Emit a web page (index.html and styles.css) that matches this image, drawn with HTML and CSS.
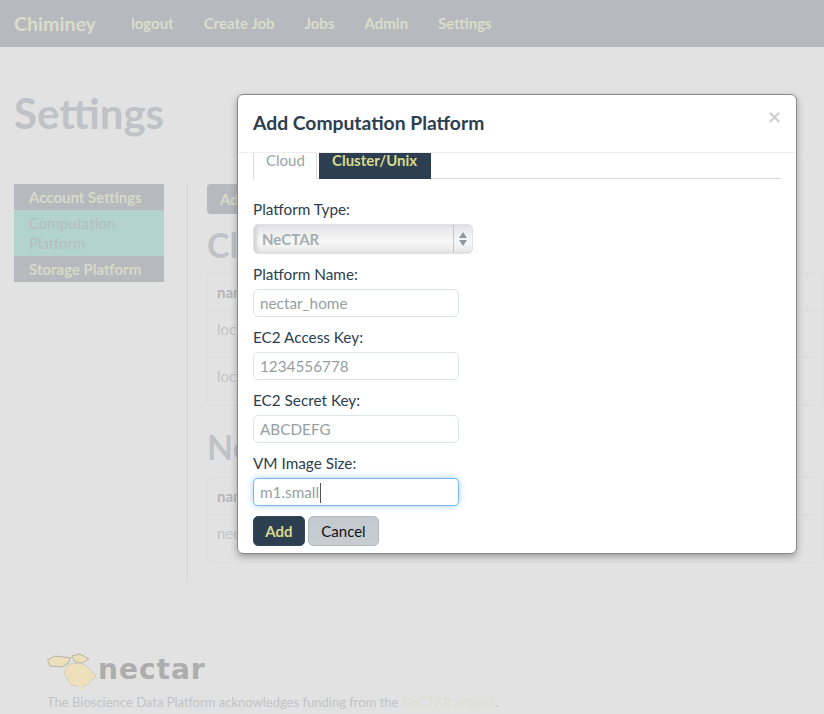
FILE: index.html
```html
<!DOCTYPE html>
<html lang="en">
<head>
  <meta charset="UTF-8">
  <title>Chiminey - Settings</title>
  <link rel="stylesheet" href="styles.css">
</head>
<body>
  <nav class="navbar">
    <a class="brand">Chiminey</a>
    <a>logout</a>
    <a>Create Job</a>
    <a>Jobs</a>
    <a>Admin</a>
    <a>Settings</a>
  </nav>

  <div class="page">
    <h1 class="page-title">Settings</h1>
    <div class="columns">
      <ul class="side-nav">
        <li>Account Settings</li>
        <li class="active">Computation Platform</li>
        <li>Storage Platform</li>
      </ul>
      <div class="content">
        <button class="add-btn">Add</button>
        <h2>Cloud</h2>
        <div class="data-table">
          <div class="row head">name</div>
          <div class="row tall">local</div>
          <div class="row tall">local</div>
        </div>
        <h2 class="second">NeCTAR</h2>
        <div class="data-table">
          <div class="row head">name</div>
          <div class="row tall">nectar_home</div>
        </div>
      </div>
    </div>
  </div>

  <footer class="footer">
    <div class="logo">
      <svg width="52" height="38" viewBox="0 0 52 38">
        <polygon points="0.5,8 8,4 24,6 21,11 15,15 3,14" fill="#ecdfba" stroke="#b5b2aa"/>
        <polygon points="25,4 33,2 42,7 36,11 28,10" fill="#ecdfba" stroke="#b5b2aa"/>
        <polygon points="21,12 33,11 40,14 49,24 40,33 35,35 24,33 17,21" fill="#eee0ba" stroke="#d0cdc2"/>
        <rect x="32" y="34" width="3" height="4" fill="#eee0ba"/>
      </svg>
      <span class="logo-text">nectar</span>
    </div>
    <p>The Bioscience Data Platform acknowledges funding from the <a>NeCTAR project</a>.</p>
  </footer>

  <div class="modal">
    <div class="modal-header">
      <h3>Add Computation Platform</h3>
      <span class="close">×</span>
    </div>
    <div class="modal-body">
      <div class="tabs">
        <a class="tab current">Cloud</a>
        <a class="tab dark">Cluster/Unix</a>
      </div>
      <form class="form">
        <label>Platform Type:</label>
        <div class="select">
          <span>NeCTAR</span>
          <span class="arrows">
            <svg width="10" height="16" viewBox="0 0 10 16"><path d="M5 1 9 7H1ZM5 15 1 9H9Z" fill="#8f989c"/></svg>
          </span>
        </div>
        <label>Platform Name:</label>
        <input class="field" type="text" value="nectar_home">
        <label>EC2 Access Key:</label>
        <input class="field" type="text" value="1234556778">
        <label>EC2 Secret Key:</label>
        <input class="field" type="text" value="ABCDEFG">
        <label>VM Image Size:</label>
        <div class="field focused">m1.small<i class="caret"></i></div>
        <div class="actions">
          <button type="button" class="btn primary">Add</button>
          <button type="button" class="btn cancel">Cancel</button>
        </div>
      </form>
    </div>
  </div>
</body>
</html>
```

FILE: styles.css
```css
* {
  box-sizing: border-box;
}

html, body {
  height: 100%;
}

body {
  margin: 0;
  background: #e2e2e2;
  font-family: Lato, 'Open Sans', sans-serif;
  font-size: 15px;
  color: #2c3e50;
  overflow: hidden;
}

.navbar {
  height: 47px;
  background: #b6b9be;
  display: flex;
  align-items: center;
  gap: 30px;
  padding: 0 0 1px 14px;
  color: #dcdccb;
  font-size: 15px;
  font-weight: 700;
}

.navbar .brand {
  font-size: 19.6px;
  margin-right: 5px;
}

.page {
  padding: 0 0 0 14px;
  height: 554px;
  border-bottom: 1px solid #dedede;
}

.page-title {
  margin: 0;
  height: 107px;
  padding-top: 41px;
  border-bottom: 1px solid #dedede;
  font-size: 42px;
  line-height: 50px;
  font-weight: 700;
  color: #bfc2c6;
}

.columns {
  display: flex;
  margin-top: 30px;
  height: 397px;
}

.side-nav {
  list-style: none;
  margin: 0;
  padding: 0;
  width: 150px;
  height: 98px;
  line-height: 20px;
  font-size: 15px;
  flex-shrink: 0;
}

.side-nav li {
  background: #b6b9be;
  color: #d9d9c8;
  font-weight: 700;
  padding: 3px 15px 3px;
  height: 26px;
}

.side-nav li.active {
  background: #b3d4cc;
  color: #b5bdbb;
  font-weight: 400;
  height: 46px;
}

.content {
  margin-left: 22px;
  padding-left: 19px;
  border-left: 2px solid #dcdcdc;
  flex: 1;
}

.add-btn {
  display: block;
  width: 60px;
  height: 30px;
  border: 0;
  border-radius: 4px;
  background: #b6b9be;
  color: #d9d9c8;
  font: 700 15px Lato, sans-serif;
  text-align: left;
  padding-left: 13px;
}

.content h2 {
  margin: 11px 0 8px;
  font-size: 34px;
  line-height: 40px;
  font-weight: 700;
  color: #bfc2c6;
}

.content h2.second {
  margin: 21px 0 10px;
}

.data-table {
  border: 1px solid #dcdcdc;
  border-radius: 4px;
  font-size: 15px;
  color: #c3c5c6;
}

.row {
  height: 37px;
  padding: 9px 9px;
  border-bottom: 1px solid #dcdcdc;
}

.row:last-child {
  border-bottom: 0;
}

.row.head {
  font-weight: 700;
  color: #b4b6b9;
}

.row.tall {
  height: 47px;
}

.footer {
  padding: 51px 0 0 47px;
}

.logo {
  display: flex;
  align-items: center;
  height: 38px;
}

.logo-text {
  margin: -3px 0 0 -1px;
  font-family: 'DejaVu Sans', sans-serif;
  font-size: 28px;
  line-height: 30px;
  font-weight: 700;
  letter-spacing: 1px;
  color: #adadad;
}

.footer p {
  margin: 2px 0 0;
  font-size: 13px;
  line-height: 20px;
  color: #c1c3c5;
  white-space: nowrap;
}

.footer p a {
  color: #dddfd5;
  font-weight: 700;
}

.modal {
  position: absolute;
  left: 237px;
  top: 94px;
  width: 560px;
  height: 460px;
  background: #fff;
  border: 1px solid #8a8a8a;
  border-radius: 6px;
  box-shadow: 0 3px 7px rgba(0, 0, 0, 0.3);
}

.modal-header {
  height: 58px;
  padding: 0 15px 2px;
  border-bottom: 1px solid #eee;
  display: flex;
  align-items: center;
  justify-content: space-between;
}

.modal-header h3 {
  margin: 0;
  font-size: 19.3px;
  font-weight: 700;
  color: #2c3e50;
}

.close {
  margin: -14px 0 0 0;
  font-size: 23px;
  font-weight: 700;
  color: #cfcfcf;
}

.modal-body {
  padding: 0 15px;
}

.tabs {
  display: flex;
  height: 26px;
  border-bottom: 1px solid #ddd;
  gap: 2px;
}

.tab {
  height: 26px;
  line-height: 15px;
  font-size: 15px;
}

.tab.current {
  width: 64px;
  padding-left: 12px;
  background: #fff;
  border: 1px solid #ddd;
  border-width: 0 1px;
  color: #98a3a5;
}

.tab.dark {
  width: 112px;
  padding-left: 13px;
  background: #2c3e50;
  color: #d8d98c;
  font-weight: 700;
}

.form label {
  display: block;
  height: 20px;
  line-height: 20px;
  font-size: 15.3px;
  margin: 20px 0 5px;
}

.form label ~ label {
  margin: 10px 0 5px;
}

.select {
  width: 220px;
  height: 30px;
  display: flex;
  align-items: center;
  justify-content: space-between;
  border: 1px solid #e0e4e8;
  border-radius: 5px;
  background: linear-gradient(to bottom, #e4e4e4, #f8f8f8 60%, #e6e6e6);
  box-shadow: inset 3px 0 3px #d4d4d4;
  padding-left: 8px;
  color: #a3adaf;
  font-weight: 700;
}

.arrows {
  width: 19px;
  height: 28px;
  border-left: 1px solid #c4c8ca;
  display: flex;
  align-items: center;
  justify-content: center;
}

.arrows svg {
  display: block;
}

.field {
  display: block;
  width: 206px;
  height: 28px;
  padding: 0 6px;
  border: 1px solid #dce4ec;
  border-radius: 5px;
  background: #fff;
  font: 15.3px/26px Lato, sans-serif;
  color: #959fa2;
  outline: none;
}

.field.focused {
  border-color: #76b6f2;
  box-shadow: 0 0 6px rgba(82, 168, 236, 0.55);
}

.caret {
  display: inline-block;
  width: 1px;
  height: 20px;
  margin-left: 1px;
  vertical-align: -5px;
  background: #555;
}

.actions {
  display: flex;
  gap: 3px;
  margin-top: 10px;
}

.btn {
  height: 30px;
  border-radius: 5px;
  font: 15px Lato, sans-serif;
}

.btn.primary {
  width: 52px;
  border: 1px solid #34495e;
  background: #2c3e50;
  color: #d8d98c;
  font-weight: 700;
}

.btn.cancel {
  width: 71px;
  border: 1px solid #b4b9bf;
  background: linear-gradient(to bottom, #c4c9cf, #c8cdd2);
  color: #111;
}
```
